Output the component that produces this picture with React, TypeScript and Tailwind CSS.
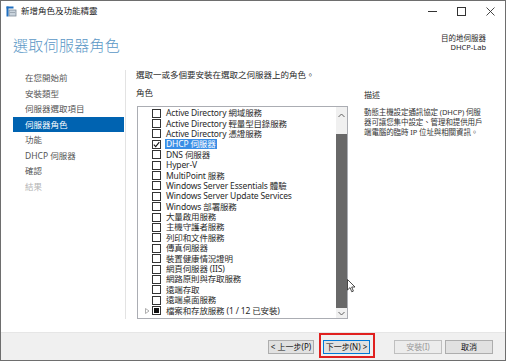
import React from "react";

const navItems = [
  "在您開始前",
  "安裝類型",
  "伺服器選取項目",
  "伺服器角色",
  "功能",
  "DHCP 伺服器",
  "確認",
  "結果",
];

const roles = [
  "Active Directory 網域服務",
  "Active Directory 輕量型目錄服務",
  "Active Directory 憑證服務",
  "DHCP 伺服器",
  "DNS 伺服器",
  "Hyper-V",
  "MultiPoint 服務",
  "Windows Server Essentials 體驗",
  "Windows Server Update Services",
  "Windows 部署服務",
  "大量啟用服務",
  "主機守護者服務",
  "列印和文件服務",
  "傳真伺服器",
  "裝置健康情況證明",
  "網頁伺服器 (IIS)",
  "網路原則與存取服務",
  "遠端存取",
  "遠端桌面服務",
  "檔案和存放服務 (1 / 12 已安裝)",
];

function TitleBar() {
  return (
    <div className="flex h-[21px] items-center bg-white pl-[5px]">
      <svg width="11" height="11" viewBox="0 0 11 11">
        <rect x="3" y="4" width="7" height="6" fill="#c9d3dc" stroke="#7d8a96" strokeWidth="0.8" />
        <line x1="4" y1="6.5" x2="9" y2="6.5" stroke="#7d8a96" strokeWidth="0.6" />
        <rect x="0.5" y="0.5" width="2" height="10" fill="#1f6fc0" />
        <rect x="0.5" y="0.5" width="7" height="2" fill="#1f6fc0" />
      </svg>
      <span className="ml-[4px] text-[8.5px] text-[#1a1a1a]">新增角色及功能精靈</span>
      <div className="ml-auto flex h-full items-center">
        <div className="flex w-[29px] justify-center">
          <div className="h-px w-[9px] bg-[#333]" />
        </div>
        <div className="flex w-[29px] justify-center">
          <div className="h-[9px] w-[9px] border border-[#333]" />
        </div>
        <div className="flex w-[29px] justify-center">
          <svg width="9" height="9" viewBox="0 0 9 9">
            <path d="M0.5 0.5 L8.5 8.5 M8.5 0.5 L0.5 8.5" stroke="#333" strokeWidth="0.9" />
          </svg>
        </div>
      </div>
    </div>
  );
}

function Checkbox({ state }: { state: "none" | "checked" | "partial" }) {
  return (
    <div className="flex h-[9px] w-[9px] shrink-0 items-center justify-center border border-[#333] bg-white">
      {state === "checked" && (
        <svg width="7" height="7" viewBox="0 0 7 7">
          <path d="M0.8 3.6 L2.7 5.6 L6.3 1.2" fill="none" stroke="#111" strokeWidth="1.1" />
        </svg>
      )}
      {state === "partial" && <div className="h-[5px] w-[5px] bg-[#111]" />}
    </div>
  );
}

function RoleList() {
  return (
    <div className="ml-[1px] flex h-[213px] w-[211px] border border-[#abadb3] bg-white">
      <div className="flex-1 pt-[1px]">
        {roles.map((r, i) => (
          <div key={r} className="flex h-[10.4px] items-center">
            <div className="flex w-[14px] shrink-0 justify-center pl-[4px]">
              {i === 19 && (
                <svg width="5" height="6" viewBox="0 0 5 6">
                  <path d="M0.5 0.5 L4 3 L0.5 5.5 Z" fill="none" stroke="#9a9a9a" strokeWidth="0.8" />
                </svg>
              )}
            </div>
            <Checkbox state={i === 3 ? "checked" : i === 19 ? "partial" : "none"} />
            <span
              className={
                i === 3
                  ? "ml-[4px] whitespace-nowrap bg-[#3a8ee6] px-[1px] text-[8.5px] leading-[10px] tracking-[-0.15px] text-white"
                  : "ml-[5px] whitespace-nowrap text-[8.5px] leading-[10px] tracking-[-0.15px] text-[#2a2a2a]"
              }
            >
              {r}
            </span>
          </div>
        ))}
      </div>
      <div className="flex w-[11px] shrink-0 flex-col bg-[#f0f0f0]">
        <div className="flex h-[17px] items-center justify-center">
          <svg width="7" height="5" viewBox="0 0 7 5">
            <path d="M0.5 4 L3.5 1 L6.5 4" fill="none" stroke="#606060" strokeWidth="1" />
          </svg>
        </div>
        <div className="h-[10px]" />
        <div className="h-[174px] bg-[#686868]" />
        <div className="flex h-[10px] items-center justify-center">
          <svg width="7" height="5" viewBox="0 0 7 5">
            <path d="M0.5 1 L3.5 4 L6.5 1" fill="none" stroke="#606060" strokeWidth="1" />
          </svg>
        </div>
      </div>
    </div>
  );
}

function Button({ label, kind }: { label: string; kind?: "default" | "disabled" }) {
  const cls =
    kind === "default"
      ? "border-[#0078d7] bg-[#e1e1e1] text-[#111]"
      : kind === "disabled"
      ? "border-[#bfbfbf] bg-[#ececec] text-[#9a9a9a]"
      : "border-[#adadad] bg-[#e1e1e1] text-[#111]";
  return (
    <div className={`flex h-[14px] w-full items-center justify-center border text-[8px] ${cls}`}>
      {label}
    </div>
  );
}

export default function App() {
  return (
    <div className="relative flex h-[361px] w-[506px] flex-col overflow-hidden border border-[#6e6e6e] bg-white font-['Noto_Sans','Noto_Sans_CJK_TC',sans-serif] text-[#2a2a2a]">
      <TitleBar />

      {/* header */}
      <div className="flex h-[43px] items-start justify-between pl-[12px] pr-[19px] pt-[12px]">
        <h1 className="mt-[2px] text-[15px] font-light leading-[18px] tracking-[0.3px] text-[#5a97c6]">
          選取伺服器角色
        </h1>
        <div className="text-right text-[7.5px] leading-[9px] text-[#1e1e1e]">
          <div>目的地伺服器</div>
          <div>DHCP-Lab</div>
        </div>
      </div>

      {/* body */}
      <div className="flex flex-1">
        <div className="mb-[13px] mt-[5px] w-[125px] border-r border-[#e3e3e3] pl-[12px] pr-px">
          {navItems.map((n, i) => (
            <div
              key={n}
              className={
                i === 3
                  ? "h-[15.5px] bg-[#0063b1] pl-[12px] text-[8.5px] leading-[15.5px] text-white"
                  : i === 7
                  ? "h-[15.5px] pl-[12px] text-[8.5px] leading-[15.5px] text-[#b4b4b4]"
                  : "h-[15.5px] pl-[12px] text-[8.5px] leading-[15.5px] text-[#555]"
              }
            >
              {n}
            </div>
          ))}
        </div>

        <div className="relative flex-1 pl-[10px] pt-[5px]">
          <p className="text-[8.5px] leading-[10px]">選取一或多個要安裝在選取之伺服器上的角色。</p>
          <div className="mt-[8px] flex">
            <div>
              <div className="text-[8.5px] leading-[10px]">角色</div>
              <div className="mt-[8px]">
                <RoleList />
              </div>
            </div>
            <div className="ml-[16px] w-[132px] pt-[2px] text-[8px] leading-[10px]">
              <div>描述</div>
              <p className="mt-[7px] text-[7.5px] tracking-[-0.1px] text-[#333]">
                <span className="block whitespace-nowrap">動態主機設定通訊協定 (DHCP) 伺服</span>
                <span className="block whitespace-nowrap">器可讓您集中設定、管理和提供用戶</span>
                <span className="block whitespace-nowrap">端電腦的臨時 IP 位址與相關資訊。</span>
              </p>
            </div>
          </div>
          {/* mouse pointer */}
          <svg className="absolute left-[221px] top-[214px]" width="9" height="14" viewBox="0 0 9 14">
            <path d="M0.5 0.5 L0.5 11 L3 8.6 L4.8 12.8 L6.4 12.1 L4.7 8 L8 8 Z" fill="#fff" stroke="#222" strokeWidth="0.8" />
          </svg>
        </div>
      </div>

      {/* footer */}
      <div className="flex h-[28px] items-center justify-end border-t border-[#e6e6e6] bg-[#f0f0f0] pr-[12px]">
        <div className="w-[46px]">
          <Button label="< 上一步(P)" />
        </div>
        <div className="relative ml-[9px] w-[47px]">
          <Button label="下一步(N) >" kind="default" />
          <span className="absolute -bottom-[4px] -left-[4px] -right-[5px] -top-[7px] border-2 border-[#e0201f]" />
        </div>
        <div className="ml-[24px] w-[48px]">
          <Button label="安裝(I)" kind="disabled" />
        </div>
        <div className="ml-[3px] w-[48px]">
          <Button label="取消" />
        </div>
      </div>
    </div>
  );
}
